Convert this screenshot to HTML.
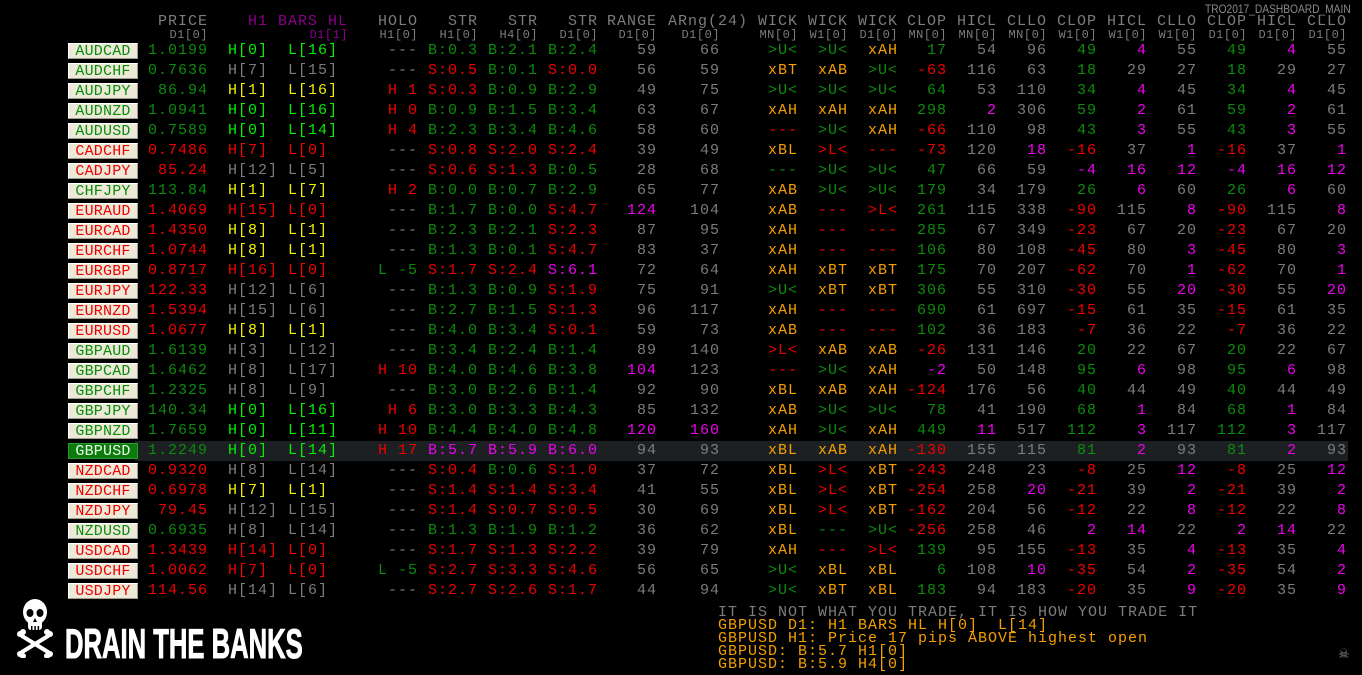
<!DOCTYPE html>
<html><head><meta charset="utf-8"><style>
html,body{margin:0;padding:0;background:#000;width:1362px;height:675px;overflow:hidden}
body{position:relative;font-family:"Liberation Mono",monospace;font-size:15px;letter-spacing:1px;color:#7c7c7c}
.r{position:absolute;left:0;width:1362px;height:20px}
.r span{position:absolute;top:0;line-height:20px;white-space:pre}
.hd span{position:absolute;white-space:pre}
.sub span{position:absolute;white-space:pre;font-size:12px;letter-spacing:.5px}
.p{right:1154px}.h{left:228px}.l{left:288px}.o{right:944px}
.s1{left:428px}.s2{left:488px}.s3{left:548px}
.rg{right:705px}.ar{right:642px}
.w1{left:768px}.w2{left:818px}.w3{left:868px}
.n1{right:415px}.n2{right:365px}.n3{right:315px}.n4{right:265px}.n5{right:215px}.n6{right:165px}.n7{right:115px}.n8{right:65px}.n9{right:15px}
.x1{right:564px}.x2{right:514px}.x3{right:464px}.hl{left:248px}.hr{right:1014px}.ha{left:668px}
.G{color:#0b8c0b}.L{color:#00f000}.Y{color:#f0f000}.R{color:#f00000}.M{color:#f000f0}.O{color:#f5a000}
.r span.b{left:68px;top:2px;width:68px;height:14px;line-height:15px;background:#ece9d8;border-top:1px solid #fff;border-left:1px solid #fff;border-right:1px solid #a09c8c;border-bottom:1px solid #a09c8c;text-align:center;font-size:15px;letter-spacing:.2px}
.r span.sel{background:#0d7a0d;color:#e8ffe8;border-color:#2a9a2a}
.bot{position:absolute;left:718px;top:606px;line-height:13px;white-space:pre;font-size:15px}
</style></head><body>
<div style="position:absolute;left:1205px;top:2px;font-family:'Liberation Sans',sans-serif;font-size:12px;letter-spacing:0;color:#8a8a8a;transform:scaleX(.85);transform-origin:left">TRO2017_DASHBOARD_MAIN</div>
<div class="hd" style="position:absolute;top:13px;left:0;width:1362px;height:18px;line-height:18px">
<span class="p">PRICE</span><span class="hl" style="color:#8a008a">H1 BARS HL</span><span class="o">HOLO</span>
<span style="right:884px">STR</span><span style="right:824px">STR</span><span style="right:764px">STR</span>
<span class="rg">RANGE</span><span class="ha">ARng(24)</span>
<span class="x1">WICK</span><span class="x2">WICK</span><span class="x3">WICK</span>
<span class="n1">CLOP</span><span class="n2">HICL</span><span class="n3">CLLO</span><span class="n4">CLOP</span><span class="n5">HICL</span><span class="n6">CLLO</span><span class="n7">CLOP</span><span class="n8">HICL</span><span class="n9">CLLO</span>
</div>
<div class="sub" style="position:absolute;top:28px;left:0;width:1362px;height:14px;line-height:14px">
<span class="p">D1[0]</span><span class="hr" style="color:#8a008a">D1[1]</span><span class="o">H1[0]</span>
<span style="right:884px">H1[0]</span><span style="right:824px">H4[0]</span><span style="right:764px">D1[0]</span>
<span class="rg">D1[0]</span><span class="ar">D1[0]</span>
<span class="x1">MN[0]</span><span class="x2">W1[0]</span><span class="x3">D1[0]</span>
<span class="n1">MN[0]</span><span class="n2">MN[0]</span><span class="n3">MN[0]</span><span class="n4">W1[0]</span><span class="n5">W1[0]</span><span class="n6">W1[0]</span><span class="n7">D1[0]</span><span class="n8">D1[0]</span><span class="n9">D1[0]</span>
</div>
<div style="position:absolute;left:135px;top:441px;width:1213px;height:20px;background:#1d2023"></div>

<div class="r" style="top:41px"><span class="b G">AUDCAD</span><span class="p G">1.0199</span><span class="h L">H[0]</span><span class="l L">L[16]</span><span class="o">---</span><span class="s1 G">B:0.3</span><span class="s2 G">B:2.1</span><span class="s3 G">B:2.4</span><span class="rg">59</span><span class="ar">66</span><span class="w1 G">&gt;U&lt;</span><span class="w2 G">&gt;U&lt;</span><span class="w3 O">xAH</span><span class="n1 G">17</span><span class="n2">54</span><span class="n3">96</span><span class="n4 G">49</span><span class="n5 M">4</span><span class="n6">55</span><span class="n7 G">49</span><span class="n8 M">4</span><span class="n9">55</span></div>
<div class="r" style="top:61px"><span class="b G">AUDCHF</span><span class="p G">0.7636</span><span class="h">H[7]</span><span class="l">L[15]</span><span class="o">---</span><span class="s1 R">S:0.5</span><span class="s2 G">B:0.1</span><span class="s3 R">S:0.0</span><span class="rg">56</span><span class="ar">59</span><span class="w1 O">xBT</span><span class="w2 O">xAB</span><span class="w3 G">&gt;U&lt;</span><span class="n1 R">-63</span><span class="n2">116</span><span class="n3">63</span><span class="n4 G">18</span><span class="n5">29</span><span class="n6">27</span><span class="n7 G">18</span><span class="n8">29</span><span class="n9">27</span></div>
<div class="r" style="top:81px"><span class="b G">AUDJPY</span><span class="p G">86.94</span><span class="h Y">H[1]</span><span class="l Y">L[16]</span><span class="o R">H 1</span><span class="s1 R">S:0.3</span><span class="s2 G">B:0.9</span><span class="s3 G">B:2.9</span><span class="rg">49</span><span class="ar">75</span><span class="w1 G">&gt;U&lt;</span><span class="w2 G">&gt;U&lt;</span><span class="w3 G">&gt;U&lt;</span><span class="n1 G">64</span><span class="n2">53</span><span class="n3">110</span><span class="n4 G">34</span><span class="n5 M">4</span><span class="n6">45</span><span class="n7 G">34</span><span class="n8 M">4</span><span class="n9">45</span></div>
<div class="r" style="top:101px"><span class="b G">AUDNZD</span><span class="p G">1.0941</span><span class="h L">H[0]</span><span class="l L">L[16]</span><span class="o R">H 0</span><span class="s1 G">B:0.9</span><span class="s2 G">B:1.5</span><span class="s3 G">B:3.4</span><span class="rg">63</span><span class="ar">67</span><span class="w1 O">xAH</span><span class="w2 O">xAH</span><span class="w3 O">xAH</span><span class="n1 G">298</span><span class="n2 M">2</span><span class="n3">306</span><span class="n4 G">59</span><span class="n5 M">2</span><span class="n6">61</span><span class="n7 G">59</span><span class="n8 M">2</span><span class="n9">61</span></div>
<div class="r" style="top:121px"><span class="b G">AUDUSD</span><span class="p G">0.7589</span><span class="h L">H[0]</span><span class="l L">L[14]</span><span class="o R">H 4</span><span class="s1 G">B:2.3</span><span class="s2 G">B:3.4</span><span class="s3 G">B:4.6</span><span class="rg">58</span><span class="ar">60</span><span class="w1 R">---</span><span class="w2 G">&gt;U&lt;</span><span class="w3 O">xAH</span><span class="n1 R">-66</span><span class="n2">110</span><span class="n3">98</span><span class="n4 G">43</span><span class="n5 M">3</span><span class="n6">55</span><span class="n7 G">43</span><span class="n8 M">3</span><span class="n9">55</span></div>
<div class="r" style="top:141px"><span class="b R">CADCHF</span><span class="p R">0.7486</span><span class="h R">H[7]</span><span class="l R">L[0]</span><span class="o">---</span><span class="s1 R">S:0.8</span><span class="s2 R">S:2.0</span><span class="s3 R">S:2.4</span><span class="rg">39</span><span class="ar">49</span><span class="w1 O">xBL</span><span class="w2 R">&gt;L&lt;</span><span class="w3 R">---</span><span class="n1 R">-73</span><span class="n2">120</span><span class="n3 M">18</span><span class="n4 R">-16</span><span class="n5">37</span><span class="n6 M">1</span><span class="n7 R">-16</span><span class="n8">37</span><span class="n9 M">1</span></div>
<div class="r" style="top:161px"><span class="b R">CADJPY</span><span class="p R">85.24</span><span class="h">H[12]</span><span class="l">L[5]</span><span class="o">---</span><span class="s1 R">S:0.6</span><span class="s2 R">S:1.3</span><span class="s3 G">B:0.5</span><span class="rg">28</span><span class="ar">68</span><span class="w1 G">---</span><span class="w2 G">&gt;U&lt;</span><span class="w3 G">&gt;U&lt;</span><span class="n1 G">47</span><span class="n2">66</span><span class="n3">59</span><span class="n4 M">-4</span><span class="n5 M">16</span><span class="n6 M">12</span><span class="n7 M">-4</span><span class="n8 M">16</span><span class="n9 M">12</span></div>
<div class="r" style="top:181px"><span class="b G">CHFJPY</span><span class="p G">113.84</span><span class="h Y">H[1]</span><span class="l Y">L[7]</span><span class="o R">H 2</span><span class="s1 G">B:0.0</span><span class="s2 G">B:0.7</span><span class="s3 G">B:2.9</span><span class="rg">65</span><span class="ar">77</span><span class="w1 O">xAB</span><span class="w2 G">&gt;U&lt;</span><span class="w3 G">&gt;U&lt;</span><span class="n1 G">179</span><span class="n2">34</span><span class="n3">179</span><span class="n4 G">26</span><span class="n5 M">6</span><span class="n6">60</span><span class="n7 G">26</span><span class="n8 M">6</span><span class="n9">60</span></div>
<div class="r" style="top:201px"><span class="b R">EURAUD</span><span class="p R">1.4069</span><span class="h R">H[15]</span><span class="l R">L[0]</span><span class="o">---</span><span class="s1 G">B:1.7</span><span class="s2 G">B:0.0</span><span class="s3 R">S:4.7</span><span class="rg M">124</span><span class="ar">104</span><span class="w1 O">xAB</span><span class="w2 R">---</span><span class="w3 R">&gt;L&lt;</span><span class="n1 G">261</span><span class="n2">115</span><span class="n3">338</span><span class="n4 R">-90</span><span class="n5">115</span><span class="n6 M">8</span><span class="n7 R">-90</span><span class="n8">115</span><span class="n9 M">8</span></div>
<div class="r" style="top:221px"><span class="b R">EURCAD</span><span class="p R">1.4350</span><span class="h Y">H[8]</span><span class="l Y">L[1]</span><span class="o">---</span><span class="s1 G">B:2.3</span><span class="s2 G">B:2.1</span><span class="s3 R">S:2.3</span><span class="rg">87</span><span class="ar">95</span><span class="w1 O">xAH</span><span class="w2 R">---</span><span class="w3 R">---</span><span class="n1 G">285</span><span class="n2">67</span><span class="n3">349</span><span class="n4 R">-23</span><span class="n5">67</span><span class="n6">20</span><span class="n7 R">-23</span><span class="n8">67</span><span class="n9">20</span></div>
<div class="r" style="top:241px"><span class="b R">EURCHF</span><span class="p R">1.0744</span><span class="h Y">H[8]</span><span class="l Y">L[1]</span><span class="o">---</span><span class="s1 G">B:1.3</span><span class="s2 G">B:0.1</span><span class="s3 R">S:4.7</span><span class="rg">83</span><span class="ar">37</span><span class="w1 O">xAH</span><span class="w2 R">---</span><span class="w3 R">---</span><span class="n1 G">106</span><span class="n2">80</span><span class="n3">108</span><span class="n4 R">-45</span><span class="n5">80</span><span class="n6 M">3</span><span class="n7 R">-45</span><span class="n8">80</span><span class="n9 M">3</span></div>
<div class="r" style="top:261px"><span class="b R">EURGBP</span><span class="p R">0.8717</span><span class="h R">H[16]</span><span class="l R">L[0]</span><span class="o G">L -5</span><span class="s1 R">S:1.7</span><span class="s2 R">S:2.4</span><span class="s3 M">S:6.1</span><span class="rg">72</span><span class="ar">64</span><span class="w1 O">xAH</span><span class="w2 O">xBT</span><span class="w3 O">xBT</span><span class="n1 G">175</span><span class="n2">70</span><span class="n3">207</span><span class="n4 R">-62</span><span class="n5">70</span><span class="n6 M">1</span><span class="n7 R">-62</span><span class="n8">70</span><span class="n9 M">1</span></div>
<div class="r" style="top:281px"><span class="b R">EURJPY</span><span class="p R">122.33</span><span class="h">H[12]</span><span class="l">L[6]</span><span class="o">---</span><span class="s1 G">B:1.3</span><span class="s2 G">B:0.9</span><span class="s3 R">S:1.9</span><span class="rg">75</span><span class="ar">91</span><span class="w1 G">&gt;U&lt;</span><span class="w2 O">xBT</span><span class="w3 O">xBT</span><span class="n1 G">306</span><span class="n2">55</span><span class="n3">310</span><span class="n4 R">-30</span><span class="n5">55</span><span class="n6 M">20</span><span class="n7 R">-30</span><span class="n8">55</span><span class="n9 M">20</span></div>
<div class="r" style="top:301px"><span class="b R">EURNZD</span><span class="p R">1.5394</span><span class="h">H[15]</span><span class="l">L[6]</span><span class="o">---</span><span class="s1 G">B:2.7</span><span class="s2 G">B:1.5</span><span class="s3 R">S:1.3</span><span class="rg">96</span><span class="ar">117</span><span class="w1 O">xAH</span><span class="w2 R">---</span><span class="w3 R">---</span><span class="n1 G">690</span><span class="n2">61</span><span class="n3">697</span><span class="n4 R">-15</span><span class="n5">61</span><span class="n6">35</span><span class="n7 R">-15</span><span class="n8">61</span><span class="n9">35</span></div>
<div class="r" style="top:321px"><span class="b R">EURUSD</span><span class="p R">1.0677</span><span class="h Y">H[8]</span><span class="l Y">L[1]</span><span class="o">---</span><span class="s1 G">B:4.0</span><span class="s2 G">B:3.4</span><span class="s3 R">S:0.1</span><span class="rg">59</span><span class="ar">73</span><span class="w1 O">xAB</span><span class="w2 R">---</span><span class="w3 R">---</span><span class="n1 G">102</span><span class="n2">36</span><span class="n3">183</span><span class="n4 R">-7</span><span class="n5">36</span><span class="n6">22</span><span class="n7 R">-7</span><span class="n8">36</span><span class="n9">22</span></div>
<div class="r" style="top:341px"><span class="b G">GBPAUD</span><span class="p G">1.6139</span><span class="h">H[3]</span><span class="l">L[12]</span><span class="o">---</span><span class="s1 G">B:3.4</span><span class="s2 G">B:2.4</span><span class="s3 G">B:1.4</span><span class="rg">89</span><span class="ar">140</span><span class="w1 R">&gt;L&lt;</span><span class="w2 O">xAB</span><span class="w3 O">xAB</span><span class="n1 R">-26</span><span class="n2">131</span><span class="n3">146</span><span class="n4 G">20</span><span class="n5">22</span><span class="n6">67</span><span class="n7 G">20</span><span class="n8">22</span><span class="n9">67</span></div>
<div class="r" style="top:361px"><span class="b G">GBPCAD</span><span class="p G">1.6462</span><span class="h">H[8]</span><span class="l">L[17]</span><span class="o R">H 10</span><span class="s1 G">B:4.0</span><span class="s2 G">B:4.6</span><span class="s3 G">B:3.8</span><span class="rg M">104</span><span class="ar">123</span><span class="w1 R">---</span><span class="w2 G">&gt;U&lt;</span><span class="w3 O">xAH</span><span class="n1 M">-2</span><span class="n2">50</span><span class="n3">148</span><span class="n4 G">95</span><span class="n5 M">6</span><span class="n6">98</span><span class="n7 G">95</span><span class="n8 M">6</span><span class="n9">98</span></div>
<div class="r" style="top:381px"><span class="b G">GBPCHF</span><span class="p G">1.2325</span><span class="h">H[8]</span><span class="l">L[9]</span><span class="o">---</span><span class="s1 G">B:3.0</span><span class="s2 G">B:2.6</span><span class="s3 G">B:1.4</span><span class="rg">92</span><span class="ar">90</span><span class="w1 O">xBL</span><span class="w2 O">xAB</span><span class="w3 O">xAH</span><span class="n1 R">-124</span><span class="n2">176</span><span class="n3">56</span><span class="n4 G">40</span><span class="n5">44</span><span class="n6">49</span><span class="n7 G">40</span><span class="n8">44</span><span class="n9">49</span></div>
<div class="r" style="top:401px"><span class="b G">GBPJPY</span><span class="p G">140.34</span><span class="h L">H[0]</span><span class="l L">L[16]</span><span class="o R">H 6</span><span class="s1 G">B:3.0</span><span class="s2 G">B:3.3</span><span class="s3 G">B:4.3</span><span class="rg">85</span><span class="ar">132</span><span class="w1 O">xAB</span><span class="w2 G">&gt;U&lt;</span><span class="w3 G">&gt;U&lt;</span><span class="n1 G">78</span><span class="n2">41</span><span class="n3">190</span><span class="n4 G">68</span><span class="n5 M">1</span><span class="n6">84</span><span class="n7 G">68</span><span class="n8 M">1</span><span class="n9">84</span></div>
<div class="r" style="top:421px"><span class="b G">GBPNZD</span><span class="p G">1.7659</span><span class="h L">H[0]</span><span class="l L">L[11]</span><span class="o R">H 10</span><span class="s1 G">B:4.4</span><span class="s2 G">B:4.0</span><span class="s3 G">B:4.8</span><span class="rg M">120</span><span class="ar M">160</span><span class="w1 O">xAH</span><span class="w2 G">&gt;U&lt;</span><span class="w3 O">xAH</span><span class="n1 G">449</span><span class="n2 M">11</span><span class="n3">517</span><span class="n4 G">112</span><span class="n5 M">3</span><span class="n6">117</span><span class="n7 G">112</span><span class="n8 M">3</span><span class="n9">117</span></div>
<div class="r" style="top:441px"><span class="b sel">GBPUSD</span><span class="p G">1.2249</span><span class="h L">H[0]</span><span class="l L">L[14]</span><span class="o R">H 17</span><span class="s1 M">B:5.7</span><span class="s2 M">B:5.9</span><span class="s3 M">B:6.0</span><span class="rg">94</span><span class="ar">93</span><span class="w1 O">xBL</span><span class="w2 O">xAB</span><span class="w3 O">xAH</span><span class="n1 R">-130</span><span class="n2">155</span><span class="n3">115</span><span class="n4 G">81</span><span class="n5 M">2</span><span class="n6">93</span><span class="n7 G">81</span><span class="n8 M">2</span><span class="n9">93</span></div>
<div class="r" style="top:461px"><span class="b R">NZDCAD</span><span class="p R">0.9320</span><span class="h">H[8]</span><span class="l">L[14]</span><span class="o">---</span><span class="s1 R">S:0.4</span><span class="s2 G">B:0.6</span><span class="s3 R">S:1.0</span><span class="rg">37</span><span class="ar">72</span><span class="w1 O">xBL</span><span class="w2 R">&gt;L&lt;</span><span class="w3 O">xBT</span><span class="n1 R">-243</span><span class="n2">248</span><span class="n3">23</span><span class="n4 R">-8</span><span class="n5">25</span><span class="n6 M">12</span><span class="n7 R">-8</span><span class="n8">25</span><span class="n9 M">12</span></div>
<div class="r" style="top:481px"><span class="b R">NZDCHF</span><span class="p R">0.6978</span><span class="h Y">H[7]</span><span class="l Y">L[1]</span><span class="o">---</span><span class="s1 R">S:1.4</span><span class="s2 R">S:1.4</span><span class="s3 R">S:3.4</span><span class="rg">41</span><span class="ar">55</span><span class="w1 O">xBL</span><span class="w2 R">&gt;L&lt;</span><span class="w3 O">xBT</span><span class="n1 R">-254</span><span class="n2">258</span><span class="n3 M">20</span><span class="n4 R">-21</span><span class="n5">39</span><span class="n6 M">2</span><span class="n7 R">-21</span><span class="n8">39</span><span class="n9 M">2</span></div>
<div class="r" style="top:501px"><span class="b R">NZDJPY</span><span class="p R">79.45</span><span class="h">H[12]</span><span class="l">L[15]</span><span class="o">---</span><span class="s1 R">S:1.4</span><span class="s2 R">S:0.7</span><span class="s3 R">S:0.5</span><span class="rg">30</span><span class="ar">69</span><span class="w1 O">xBL</span><span class="w2 R">&gt;L&lt;</span><span class="w3 O">xBT</span><span class="n1 R">-162</span><span class="n2">204</span><span class="n3">56</span><span class="n4 R">-12</span><span class="n5">22</span><span class="n6 M">8</span><span class="n7 R">-12</span><span class="n8">22</span><span class="n9 M">8</span></div>
<div class="r" style="top:521px"><span class="b G">NZDUSD</span><span class="p G">0.6935</span><span class="h">H[8]</span><span class="l">L[14]</span><span class="o">---</span><span class="s1 G">B:1.3</span><span class="s2 G">B:1.9</span><span class="s3 G">B:1.2</span><span class="rg">36</span><span class="ar">62</span><span class="w1 O">xBL</span><span class="w2 G">---</span><span class="w3 G">&gt;U&lt;</span><span class="n1 R">-256</span><span class="n2">258</span><span class="n3">46</span><span class="n4 M">2</span><span class="n5 M">14</span><span class="n6">22</span><span class="n7 M">2</span><span class="n8 M">14</span><span class="n9">22</span></div>
<div class="r" style="top:541px"><span class="b R">USDCAD</span><span class="p R">1.3439</span><span class="h R">H[14]</span><span class="l R">L[0]</span><span class="o">---</span><span class="s1 R">S:1.7</span><span class="s2 R">S:1.3</span><span class="s3 R">S:2.2</span><span class="rg">39</span><span class="ar">79</span><span class="w1 O">xAH</span><span class="w2 R">---</span><span class="w3 R">&gt;L&lt;</span><span class="n1 G">139</span><span class="n2">95</span><span class="n3">155</span><span class="n4 R">-13</span><span class="n5">35</span><span class="n6 M">4</span><span class="n7 R">-13</span><span class="n8">35</span><span class="n9 M">4</span></div>
<div class="r" style="top:561px"><span class="b R">USDCHF</span><span class="p R">1.0062</span><span class="h R">H[7]</span><span class="l R">L[0]</span><span class="o G">L -5</span><span class="s1 R">S:2.7</span><span class="s2 R">S:3.3</span><span class="s3 R">S:4.6</span><span class="rg">56</span><span class="ar">65</span><span class="w1 G">&gt;U&lt;</span><span class="w2 O">xBL</span><span class="w3 O">xBL</span><span class="n1 G">6</span><span class="n2">108</span><span class="n3 M">10</span><span class="n4 R">-35</span><span class="n5">54</span><span class="n6 M">2</span><span class="n7 R">-35</span><span class="n8">54</span><span class="n9 M">2</span></div>
<div class="r" style="top:581px"><span class="b R">USDJPY</span><span class="p R">114.56</span><span class="h">H[14]</span><span class="l">L[6]</span><span class="o">---</span><span class="s1 R">S:2.7</span><span class="s2 R">S:2.6</span><span class="s3 R">S:1.7</span><span class="rg">44</span><span class="ar">94</span><span class="w1 G">&gt;U&lt;</span><span class="w2 O">xBT</span><span class="w3 O">xBL</span><span class="n1 G">183</span><span class="n2">94</span><span class="n3">183</span><span class="n4 R">-20</span><span class="n5">35</span><span class="n6 M">9</span><span class="n7 R">-20</span><span class="n8">35</span><span class="n9 M">9</span></div>

<div class="bot">IT IS NOT WHAT YOU TRADE, IT IS HOW YOU TRADE IT
<span class="O">GBPUSD D1: H1 BARS HL H[0]  L[14]
GBPUSD H1: Price 17 pips ABOVE highest open
GBPUSD: B:5.7 H1[0]
GBPUSD: B:5.9 H4[0]</span></div>

<svg style="position:absolute;left:14px;top:598px" width="42" height="60" viewBox="0 0 42 60">
 <g fill="#fff">
  <ellipse cx="21" cy="14" rx="12" ry="13"/>
  <rect x="14" y="20" width="14" height="12" rx="3"/>
 </g>
 <g fill="#000">
  <ellipse cx="16" cy="15" rx="3.5" ry="4"/>
  <ellipse cx="26" cy="15" rx="3.5" ry="4"/>
  <path d="M21 20 L19 24 L23 24 Z"/>
  <rect x="17" y="28" width="1.5" height="4"/><rect x="20.3" y="28" width="1.5" height="4"/><rect x="23.6" y="28" width="1.5" height="4"/>
 </g>
 <g stroke="#fff" stroke-width="4" stroke-linecap="round">
  <line x1="8" y1="38" x2="34" y2="54"/>
  <line x1="34" y1="38" x2="8" y2="54"/>
 </g>
 <g fill="#fff">
  <circle cx="6" cy="36" r="3"/><circle cx="9" cy="34" r="3"/>
  <circle cx="36" cy="36" r="3"/><circle cx="33" cy="34" r="3"/>
  <circle cx="6" cy="56" r="3"/><circle cx="9" cy="58" r="3"/>
  <circle cx="36" cy="56" r="3"/><circle cx="33" cy="58" r="3"/>
 </g>
</svg>
<div style="position:absolute;left:65px;top:622px;font-family:'Liberation Sans',sans-serif;font-weight:bold;font-size:42px;line-height:44px;color:#fff;letter-spacing:0;transform:scaleX(.61);transform-origin:left;white-space:nowrap;-webkit-text-stroke:1px #fff">DRAIN THE BANKS</div>
<div style="position:absolute;left:1338px;top:647px;font-family:'DejaVu Sans',sans-serif;font-size:13px;color:#888;letter-spacing:0">☠</div>
</body></html>
